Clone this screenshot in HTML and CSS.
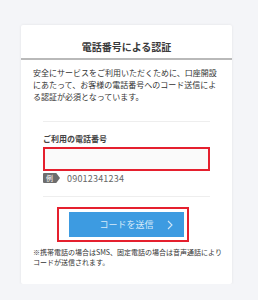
FILE: index.html
```html
<!DOCTYPE html>
<html lang="ja">
<head>
    <meta charset="UTF-8">
    <meta name="viewport" content="width=device-width, initial-scale=1.0">
    <title>電話番号による認証</title>
    <link rel="stylesheet" href="styles.css">
</head>
<body>

    <div class="card">
        <h1 class="card-title">電話番号による認証</h1>
        <p class="lead">安全にサービスをご利用いただくために、口座開設にあたって、お客様の電話番号へのコード送信による認証が必須となっています。</p>

        <div class="field">
            <label class="field-label" for="phone">ご利用の電話番号</label>
            <input type="tel" id="phone" class="phone-input">
            <div class="example">
                <span class="example-badge">例</span>
                <span class="example-num">09012341234</span>
            </div>
        </div>

        <div class="submit-box">
            <button class="submit">コードを送信
                <svg class="chevron" width="6" height="10" viewBox="0 0 6 10">
                    <polyline points="1,1 5,5 1,9" fill="none" stroke="#cfe5f7" stroke-width="1.1"/>
                </svg>
            </button>
        </div>

        <p class="note">※携帯電話の場合はSMS、固定電話の場合は音声通話によりコードが送信されます。</p>
    </div>

</body>
</html>
```

FILE: styles.css
```css
body {
    margin: 0;
    background-color: #f4f5f8;
    font-family: 'Noto Sans CJK JP', 'Noto Sans', sans-serif;
    color: #333;
}

.card {
    width: 211px;
    margin: 25px 0 0 21px;
    padding-bottom: 17px;
    background-color: #fff;
    border-radius: 2px;
    box-shadow: 0 0 3px rgba(0, 0, 0, 0.08);
}

.card-title {
    margin: 0;
    padding: 15px 0 4px;
    font-size: 10px;
    line-height: 14px;
    font-weight: 700;
    text-align: center;
    color: #3a3a3a;
    border-bottom: 2px solid #b9b9b9;
}

.lead {
    margin: 7px 0 0;
    padding: 0 12px;
    font-size: 8px;
    line-height: 12px;
}

.field {
    margin: 18px 22px 0;
    padding: 11px 0 12px;
    border-top: 1px solid #eeeeee;
    border-bottom: 1px solid #eeeeee;
}

.field-label {
    display: block;
    font-size: 8px;
    line-height: 12px;
    font-weight: 700;
    color: #444;
}

.phone-input {
    display: block;
    width: 100%;
    height: 24px;
    box-sizing: border-box;
    margin-top: 2px;
    border: 2px solid #e5202e;
    background-color: #fafafa;
    outline: none;
}

.example {
    display: flex;
    align-items: center;
    gap: 7px;
    margin-top: 1px;
    height: 12px;
}

.example-badge {
    width: 17px;
    height: 10px;
    background-color: #6d6d6d;
    color: #fff;
    font-size: 7px;
    line-height: 10px;
    padding-left: 3px;
    box-sizing: border-box;
    clip-path: polygon(0 0, 78% 0, 100% 50%, 78% 100%, 0 100%);
    border-radius: 1px;
}

.example-num {
    font-size: 9px;
    color: #666;
    letter-spacing: 0.2px;
}

.submit-box {
    width: 132px;
    height: 35px;
    box-sizing: border-box;
    margin: 10px 0 0 36px;
    padding: 3px 3px 3px 10px;
    border: 2px solid #e5202e;
}

.submit {
    position: relative;
    display: block;
    width: 115px;
    height: 25px;
    border: none;
    padding: 0;
    background-color: #3d9be1;
    color: #d6eaf9;
    font-family: inherit;
    font-size: 9px;
    cursor: pointer;
}

.chevron {
    position: absolute;
    right: 11px;
    top: 8px;
}

.note {
    margin: 5px 0 0;
    padding: 0 8px 0 12px;
    font-size: 7px;
    line-height: 10px;
}
```
